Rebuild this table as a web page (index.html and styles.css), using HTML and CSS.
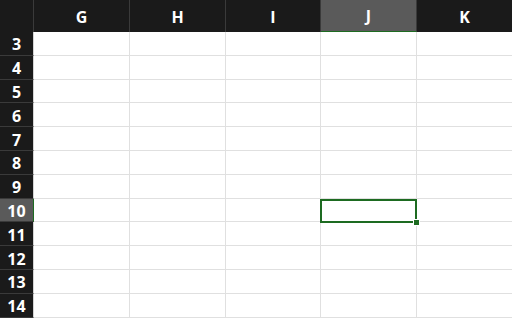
FILE: index.html
```html
<!DOCTYPE html>
<html>
<head>
<meta charset="utf-8">
<link rel="stylesheet" href="styles.css">
</head>
<body>
<div class="sheet">
  <div class="corner"></div>
  <div class="colhead">G</div>
  <div class="colhead">H</div>
  <div class="colhead">I</div>
  <div class="colhead sel">J</div>
  <div class="colhead">K</div>

  <div class="rowhead">3</div><div class="cell"></div><div class="cell"></div><div class="cell"></div><div class="cell"></div><div class="cell"></div>
  <div class="rowhead">4</div><div class="cell"></div><div class="cell"></div><div class="cell"></div><div class="cell"></div><div class="cell"></div>
  <div class="rowhead">5</div><div class="cell"></div><div class="cell"></div><div class="cell"></div><div class="cell"></div><div class="cell"></div>
  <div class="rowhead">6</div><div class="cell"></div><div class="cell"></div><div class="cell"></div><div class="cell"></div><div class="cell"></div>
  <div class="rowhead">7</div><div class="cell"></div><div class="cell"></div><div class="cell"></div><div class="cell"></div><div class="cell"></div>
  <div class="rowhead">8</div><div class="cell"></div><div class="cell"></div><div class="cell"></div><div class="cell"></div><div class="cell"></div>
  <div class="rowhead">9</div><div class="cell"></div><div class="cell"></div><div class="cell"></div><div class="cell"></div><div class="cell"></div>
  <div class="rowhead sel">10</div><div class="cell"></div><div class="cell"></div><div class="cell"></div><div class="cell active"><div class="selbox"><span class="handle"></span></div></div><div class="cell"></div>
  <div class="rowhead">11</div><div class="cell"></div><div class="cell"></div><div class="cell"></div><div class="cell"></div><div class="cell"></div>
  <div class="rowhead">12</div><div class="cell"></div><div class="cell"></div><div class="cell"></div><div class="cell"></div><div class="cell"></div>
  <div class="rowhead">13</div><div class="cell"></div><div class="cell"></div><div class="cell"></div><div class="cell"></div><div class="cell"></div>
  <div class="rowhead">14</div><div class="cell"></div><div class="cell"></div><div class="cell"></div><div class="cell"></div><div class="cell"></div>
</div>
</body>
</html>
```
FILE: styles.css
```css
html, body {
  margin: 0;
  padding: 0;
  background: #ffffff;
  overflow: hidden;
}
.sheet {
  display: grid;
  grid-template-columns: 34px 96px 96px 95px 96px 96px;
  grid-template-rows: 32px;
  grid-auto-rows: 23.8px;
  width: 513px;
  font-family: "Open Sans", "Noto Sans", sans-serif;
  font-weight: 700;
  font-size: 16px;
  color: #ffffff;
}
.corner {
  background: #1a1a1a;
  border-right: 1px solid #3a3a3a;
  box-sizing: border-box;
}
.colhead {
  background: #1a1a1a;
  border-right: 1px solid #3a3a3a;
  box-sizing: border-box;
  display: flex;
  align-items: center;
  justify-content: center;
  padding-top: 1px;
}
.colhead.sel {
  background: #5a5a5a;
  border-bottom: 1px solid #1d6b21;
}
.rowhead {
  background: #1a1a1a;
  border-right: 1px solid #d4d4d4;
  border-bottom: 1px solid #3a3a3a;
  box-sizing: border-box;
  display: flex;
  align-items: center;
  justify-content: center;
  padding-top: 2px;
}
.rowhead.sel {
  background: #5a5a5a;
  border-right: 1px solid #1d6b21;
}
.cell {
  border-right: 1px solid #e0e0e0;
  border-bottom: 1px solid #e0e0e0;
  box-sizing: border-box;
}
.cell.active {
  position: relative;
}
.selbox {
  position: absolute;
  left: -1px;
  top: 0;
  right: -1px;
  bottom: -2px;
  border: 2px solid #1d6b21;
}
.handle {
  position: absolute;
  right: -5px;
  bottom: -5px;
  width: 5px;
  height: 5px;
  background: #1d6b21;
  border: 1px solid #ffffff;
}
```
